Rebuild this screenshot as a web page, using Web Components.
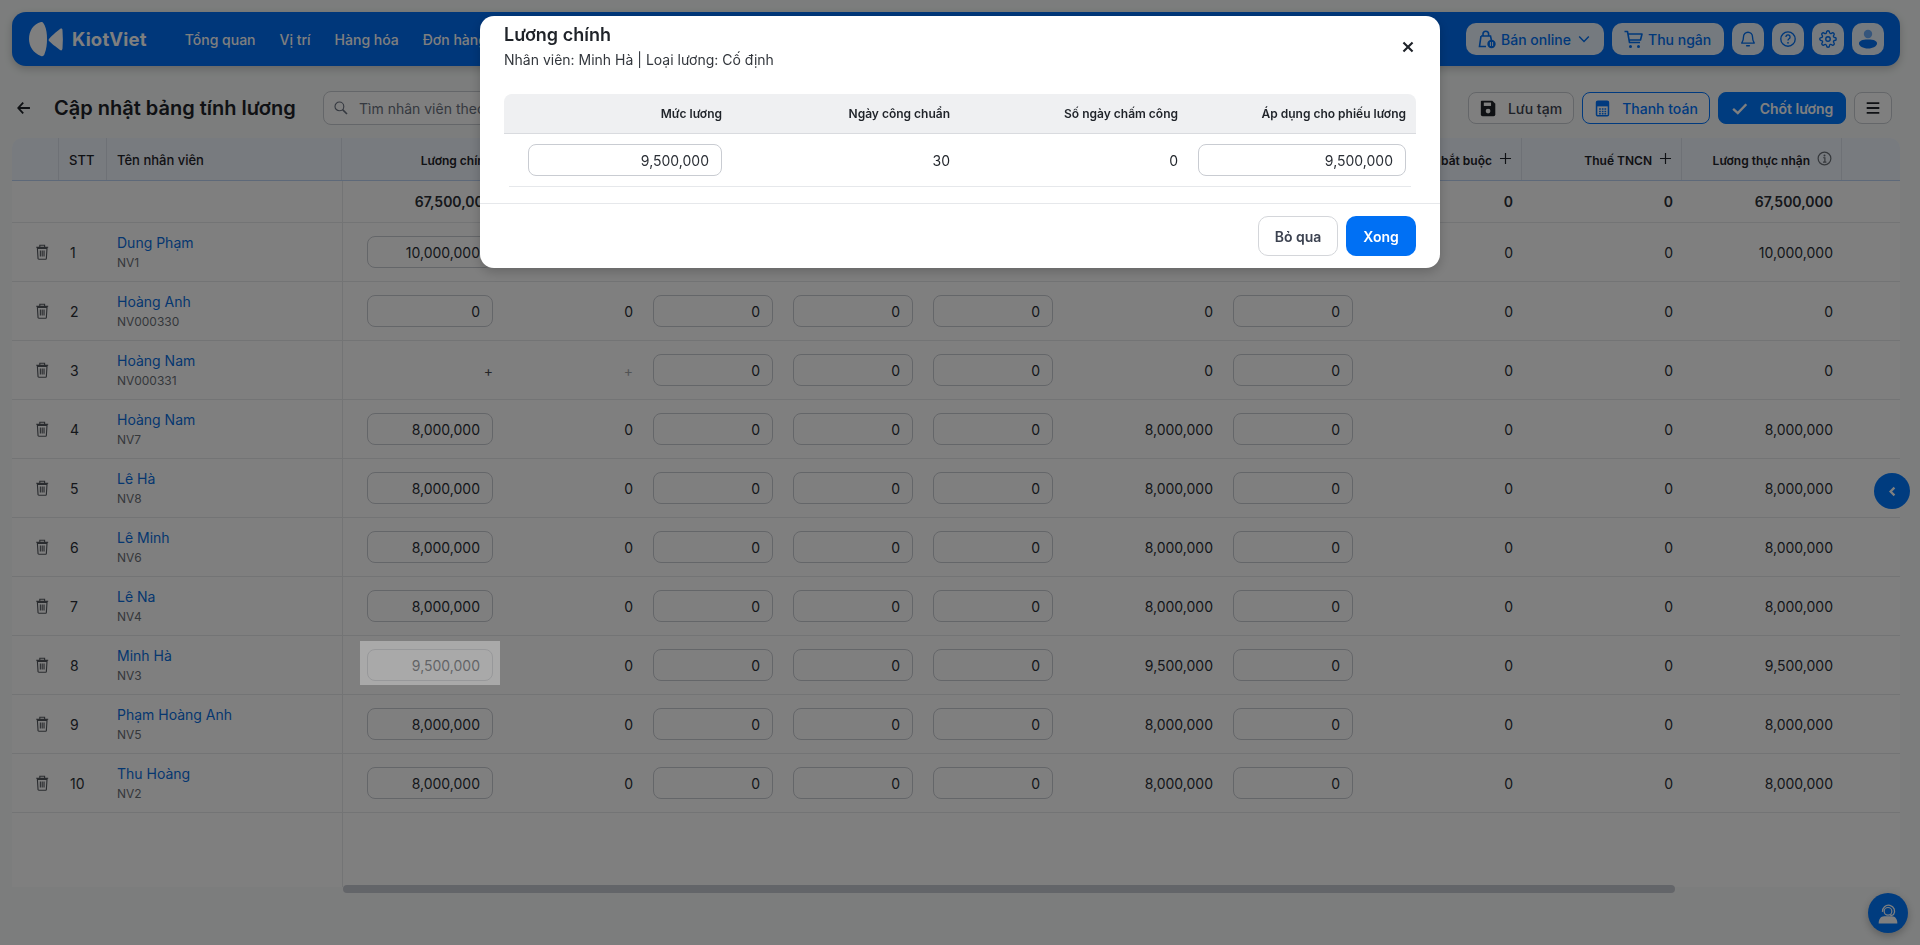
<!DOCTYPE html>
<html lang="vi">
<head>
<meta charset="utf-8">
<title>Cập nhật bảng tính lương</title>
<style>
    html, body { margin: 0; height: 100%; overflow: hidden; }
    body {
        background: #f8fbfa;
        font-family: Inter, "Noto Sans", sans-serif;
        color: #1f2329;
        padding: 12px 20px 0 12px;
        box-sizing: border-box;
    }
</style>
</head>
<body>
<kv-header></kv-header>
<kv-toolbar></kv-toolbar>
<kv-table></kv-table>
<kv-floats></kv-floats>
<kv-overlay>
    <kv-modal></kv-modal>
</kv-overlay>

<script>
const ICONS = {
    bag: '<path d="M4 7h9.500l1 4.500M4 7 2.500 17.500H9M6 7V5a2.800 2.800 0 0 1 5.600 0v2" fill="none" stroke="currentColor" stroke-width="1.600"/><circle cx="14.500" cy="15" r="4.200" fill="currentColor"/><path d="M13.400 13v4M15.600 13v4" stroke="#eaf4ff" stroke-width="1"/>',
    cart: '<path d="M1.500 2.500h3l2 11h10.500M5 5h14l-1.500 6H6" fill="none" stroke="currentColor" stroke-width="1.600" stroke-linejoin="round"/><circle cx="7.500" cy="17.500" r="1.500" fill="currentColor"/><circle cx="15.500" cy="17.500" r="1.500" fill="currentColor"/>',
    bell: '<path d="M10 2.500a5 5 0 0 0-5 5c0 4.500-1.500 6-2 7h14c-.5-1-2-2.500-2-7a5 5 0 0 0-5-5z" fill="none" stroke="currentColor" stroke-width="1.500" stroke-linejoin="round"/><path d="M8.500 17.500h3" stroke="currentColor" stroke-width="1.600" stroke-linecap="round"/>',
    help: '<circle cx="10" cy="10" r="8" fill="none" stroke="currentColor" stroke-width="1.500"/><path d="M7.700 7.700a2.300 2.300 0 1 1 3.500 2c-.8.5-1.200 1-1.200 2" fill="none" stroke="currentColor" stroke-width="1.500"/><circle cx="10" cy="14.200" r="1" fill="currentColor"/>',
    gear: '<g transform="scale(.833)" fill="none" stroke="currentColor" stroke-width="1.800"><circle cx="12" cy="12" r="3"/><path d="M19.4 15a1.65 1.65 0 0 0 .33 1.82l.06.06a2 2 0 0 1 0 2.83 2 2 0 0 1-2.83 0l-.06-.06a1.65 1.65 0 0 0-1.82-.33 1.65 1.65 0 0 0-1 1.51V21a2 2 0 0 1-2 2 2 2 0 0 1-2-2v-.09A1.65 1.65 0 0 0 9 19.4a1.65 1.65 0 0 0-1.82.33l-.06.06a2 2 0 0 1-2.83 0 2 2 0 0 1 0-2.83l.06-.06a1.65 1.65 0 0 0 .33-1.82 1.65 1.65 0 0 0-1.51-1H3a2 2 0 0 1-2-2 2 2 0 0 1 2-2h.09A1.65 1.65 0 0 0 4.6 9a1.65 1.65 0 0 0-.33-1.82l-.06-.06a2 2 0 0 1 0-2.83 2 2 0 0 1 2.83 0l.06.06a1.65 1.65 0 0 0 1.82.33H9a1.65 1.65 0 0 0 1-1.51V3a2 2 0 0 1 2-2 2 2 0 0 1 2 2v.09a1.65 1.65 0 0 0 1 1.51 1.65 1.65 0 0 0 1.82-.33l.06-.06a2 2 0 0 1 2.83 0 2 2 0 0 1 0 2.83l-.06.06a1.65 1.65 0 0 0-.33 1.82V9a1.65 1.65 0 0 0 1.51 1H21a2 2 0 0 1 2 2 2 2 0 0 1-2 2h-.09a1.65 1.65 0 0 0-1.51 1z"/></g>',
    user: '<circle cx="10" cy="5" r="4.200" fill="currentColor" opacity=".55"/><path d="M1 14.500C1 12 4 10.500 10 10.500s9 1.500 9 4-4 5-9 5-9-2.500-9-5z" fill="currentColor"/>',
    save: '<path d="M2 1h12.500L18 4.500V17a2 2 0 0 1-2 2H3a2 2 0 0 1-2-2V2a1 1 0 0 1 1-1z" fill="currentColor"/><rect x="4.500" y="3" width="8.500" height="4" fill="#fff"/><circle cx="9.500" cy="13" r="2.800" fill="#fff"/>',
    calc: '<rect x="3" y="1.500" width="14" height="17" rx="1.500" fill="none" stroke="currentColor" stroke-width="1.800"/><rect x="3" y="1.500" width="14" height="6" fill="currentColor"/><path d="M6 10.500h2M9.200 10.500h2M12.300 10.500h2M6 13.500h2M9.200 13.500h2M12.300 13.500h2M6 16.200h2M9.200 16.200h2M12.300 16.200h2" stroke="currentColor" stroke-width="1.800"/>',
    check: '<path d="M2.500 10.500 8 15.500 18 5" fill="none" stroke="currentColor" stroke-width="2.800"/>',
    menu: '<path d="M3 4.500h14M3 10h14M3 15.500h14" fill="none" stroke="currentColor" stroke-width="2"/>',
    chevron: '<path d="M4 7l6 6 6-6" fill="none" stroke="currentColor" stroke-width="1.800"/>',
    back: '<path d="M15.500 10H2.500M8 4 2.500 10 8 16" fill="none" stroke="currentColor" stroke-width="2"/>',
    search: '<circle cx="8" cy="8" r="5.500" fill="none" stroke="currentColor" stroke-width="1.400"/><path d="M12 12l5.500 5.500" stroke="currentColor" stroke-width="2"/>',
    trash: '<path d="M3 5.500h12l-.8 12.500a1 1 0 0 1-1 1H4.800a1 1 0 0 1-1-1zM1.500 4h15M6 4V1.500h6V4M6.700 8v7.500M9 8v7.500M11.300 8v7.500" fill="none" stroke="currentColor" stroke-width="1.400"/>',
    plus: '<path d="M10 1.500v17M1.500 10h17" stroke="currentColor" stroke-width="1.800"/>',
    info: '<circle cx="10" cy="10" r="8.500" fill="none" stroke="currentColor" stroke-width="1.600"/><circle cx="10" cy="6" r="1.300" fill="currentColor"/><path d="M8.200 9h2.300v5.500M8 14.800h4.500" fill="none" stroke="currentColor" stroke-width="1.600"/>',
    close: '<path d="M3.500 3.500l13 13M16.500 3.500l-13 13" stroke="currentColor" stroke-width="3"/>',
    left: '<path d="M13 4l-6 6 6 6" fill="none" stroke="currentColor" stroke-width="3.400"/>',
    agent: '<path d="M5 9a5.500 5.500 0 1 1 10 2.500M12 12.200c1.500 0 3-.4 3-1" fill="none" stroke="currentColor" stroke-width="1.200"/><circle cx="10" cy="8.500" r="3.500" fill="none" stroke="currentColor" stroke-width="1.100"/><path d="M1.500 19.500c0-4 2-6.500 5-6.500h7c3 0 5 2.500 5 6.500z" fill="currentColor"/>'
};

function icon(name, size) {
    return `<svg width="${size}" height="${size}" viewBox="0 0 20 20" aria-hidden="true">${ICONS[name]}</svg>`;
}

class KvHeader extends HTMLElement {
    constructor() {
        super();
        this.attachShadow({ mode: 'open' });
        this.shadowRoot.innerHTML = `
            <style>
                :host {
                    display: flex;
                    align-items: center;
                    height: 54px;
                    padding: 0 16px;
                    box-sizing: border-box;
                    background: #006ef4;
                    border-radius: 14px;
                    box-shadow: 0 3px 8px rgba(0, 0, 0, .2);
                    color: #fff;
                }
                .logo { display: flex; align-items: center; gap: 9px; }
                .logo b { font-size: 18.500px; font-weight: 700; letter-spacing: .2px; }
                nav { display: flex; gap: 24px; margin-left: 38px; font-size: 14px; font-weight: 500; white-space: nowrap; }
                .right { margin-left: auto; display: flex; gap: 8px; }
                .btn {
                    height: 32px;
                    min-width: 32px;
                    display: flex;
                    align-items: center;
                    justify-content: center;
                    box-sizing: border-box;
                    background: #eaf4ff;
                    color: #0070f4;
                    border-radius: 10px;
                    font-size: 14px;
                    font-weight: 500;
                    white-space: nowrap;
                }
                .btn.wide { justify-content: flex-start; padding-left: 11px; gap: 4px; }
                .btn.sq { width: 32px; }
            </style>
            <div class="logo">
                <svg width="35" height="36" viewBox="0 0 35 36">
                    <path d="M13 1C5 3 1 10 1 18c0 7 4 14 12 17 2 .6 3-.4 3.500-2 2-5 2.500-10 2.500-15 0-5-.5-10-2.500-14C15.500 2 15 .5 13 1z" fill="#fff"/>
                    <path d="M21 18c2-2.500 7-7 11-10 1.500-1 2.500-.5 2.500 1.500.5 6 .5 12 0 18-.3 2-1.300 2.500-2.500 1.500-4-3-9-7-11-9-.5-.6-.5-1.400 0-2z" fill="#fff"/>
                </svg>
                <b>KiotViet</b>
            </div>
            <nav><span>Tổng quan</span><span>Vị trí</span><span>Hàng hóa</span><span>Đơn hàng</span></nav>
            <div class="right">
                <div class="btn wide" style="width:138px">${icon('bag', 20)}<span>Bán online</span><span style="display:flex;margin-left:1px">${icon('chevron', 16)}</span></div>
                <div class="btn wide" style="width:112px;gap:5px">${icon('cart', 20)}<span>Thu ngân</span></div>
                <div class="btn sq">${icon('bell', 18)}</div>
                <div class="btn sq">${icon('help', 18)}</div>
                <div class="btn sq">${icon('gear', 18)}</div>
                <div class="btn sq">${icon('user', 20)}</div>
            </div>
        `;
    }
}

class KvToolbar extends HTMLElement {
    constructor() {
        super();
        this.attachShadow({ mode: 'open' });
        this.shadowRoot.innerHTML = `
            <style>
                :host {
                    display: flex;
                    align-items: center;
                    height: 34px;
                    margin: 25px 8px 13px 4px;
                }
                .back { display: flex; color: #1f2329; }
                h1 { margin: 0 0 0 20px; font-size: 20px; font-weight: 600; white-space: nowrap; width: 269px; }
                .search {
                    width: 300px;
                    height: 34px;
                    box-sizing: border-box;
                    border: 1px solid #c9ccd2;
                    border-radius: 8px;
                    display: flex;
                    align-items: center;
                    gap: 10px;
                    padding-left: 9px;
                    font-size: 14px;
                    color: #6b7280;
                    background: #fff;
                    white-space: nowrap;
                    overflow: hidden;
                }
                .actions { margin-left: auto; display: flex; gap: 8px; }
                .btn {
                    height: 32px;
                    box-sizing: border-box;
                    display: flex;
                    align-items: center;
                    justify-content: center;
                    gap: 11px;
                    border: 1px solid #c9ccd2;
                    border-radius: 8px;
                    font-size: 14px;
                    font-weight: 500;
                    background: #fff;
                    color: #3c4250;
                    white-space: nowrap;
                }
                .outline { border-color: #0074ff; color: #0074ff; }
                .solid { background: #0078ff; border-color: #0078ff; color: #fff; font-weight: 600; }
            </style>
            <span class="back">${icon('back', 18)}</span>
            <h1>Cập nhật bảng tính lương</h1>
            <div class="search">${icon('search', 16)}<span>Tìm nhân viên theo mã, tên</span></div>
            <div class="actions">
                <div class="btn" style="width:106px"><span style="color:#1f2329;display:flex">${icon('save', 17)}</span><span>Lưu tạm</span></div>
                <div class="btn outline" style="width:128px">${icon('calc', 17)}<span>Thanh toán</span></div>
                <div class="btn solid" style="width:128px;gap:12px">${icon('check', 17)}<span>Chốt lương</span></div>
                <div class="btn" style="width:38px;color:#1f2329">${icon('menu', 18)}</div>
            </div>
        `;
    }
}

class KvMoney extends HTMLElement {
    constructor() {
        super();
        this.attachShadow({ mode: 'open' });
        this.shadowRoot.innerHTML = `
            <style>
                :host {
                    display: flex;
                    align-items: center;
                    justify-content: flex-end;
                    height: 32px;
                    box-sizing: border-box;
                    padding-right: 12px;
                    border: 1px solid #c9ccd2;
                    border-radius: 8px;
                    background: #fff;
                    font-size: 14px;
                    color: #2b2f36;
                    flex: none;
                }
            </style>
            <slot></slot>
        `;
    }
}

const EMPLOYEES = [
    ['Dung Phạm', 'NV1', '10,000,000'],
    ['Hoàng Anh', 'NV000330', '0'],
    ['Hoàng Nam', 'NV000331', null],
    ['Hoàng Nam', 'NV7', '8,000,000'],
    ['Lê Hà', 'NV8', '8,000,000'],
    ['Lê Minh', 'NV6', '8,000,000'],
    ['Lê Na', 'NV4', '8,000,000'],
    ['Minh Hà', 'NV3', '9,500,000'],
    ['Phạm Hoàng Anh', 'NV5', '8,000,000'],
    ['Thu Hoàng', 'NV2', '8,000,000']
];

class KvTable extends HTMLElement {
    constructor() {
        super();
        this.attachShadow({ mode: 'open' });

        const rows = EMPLOYEES.map((e, i) => {
            const pay = e[2];
            const total = pay || '0';
            const first = pay
                ? `<kv-money style="width:126px">${pay}</kv-money>`
                : `<span class="plus-a">+</span>`;
            const second = pay ? '0' : `<span class="plus-b">+</span>`;
            return `
                <div class="row">
                    <div class="c trash">${icon('trash', 16)}</div>
                    <div class="c stt">${i + 1}</div>
                    <div class="c name"><a>${e[0]}</a><small>${e[1]}</small></div>
                    <div class="c r first">${first}</div>
                    <div class="c r">${second}</div>
                    <div class="c r"><kv-money style="width:120px">0</kv-money></div>
                    <div class="c r"><kv-money style="width:120px">0</kv-money></div>
                    <div class="c r"><kv-money style="width:120px">0</kv-money></div>
                    <div class="c r">${total}</div>
                    <div class="c r"><kv-money style="width:120px">0</kv-money></div>
                    <div class="c r n">0</div>
                    <div class="c r n">0</div>
                    <div class="c r n">${total}</div>
                    <div class="c"></div>
                </div>`;
        }).join('');

        this.shadowRoot.innerHTML = `
            <style>
                :host {
                    display: block;
                    position: relative;
                    height: 749px;
                    background: #fff;
                    border-radius: 10px 10px 0 0;
                    --cols: 47px 48px 235px 160px 141px 140px 140px 140px 160px 140px 159px 160px 160px 58px;
                    font-size: 14px;
                    color: #2b2f36;
                }
                .head, .total, .row { display: grid; grid-template-columns: var(--cols); }
                .head {
                    height: 43px;
                    box-sizing: border-box;
                    background: #f0f6ff;
                    border-bottom: 1px solid #bcd2f2;
                    border-radius: 10px 10px 0 0;
                    font-size: 12px;
                    font-weight: 600;
                    color: #1f2329;
                }
                .head .h {
                    display: flex;
                    align-items: center;
                    justify-content: flex-end;
                    gap: 7px;
                    padding: 2px 9px 0 10px;
                    box-sizing: border-box;
                    border-right: 1px solid #dde3ec;
                    white-space: nowrap;
                }
                .head .h.l { justify-content: flex-start; font-size: 13px; font-weight: 500; }
                .head svg { margin-top: -4px; }
                .total { height: 41px; border-bottom: 1px solid #e6e8eb; font-weight: 600; }
                .row { height: 59px; box-sizing: border-box; border-bottom: 1px solid #e6e8eb; }
                .c { display: flex; align-items: center; padding: 0 10px; box-sizing: border-box; min-width: 0; }
                .r { justify-content: flex-end; }
                .first { padding-right: 9px; }
                .n { padding-right: 9px; }
                .trash { padding: 0 0 0 23px; color: #55595f; }
                .stt { padding-left: 11px; }
                .name { flex-direction: column; align-items: flex-start; justify-content: center; gap: 3px; }
                .name a { color: #0a6ee0; line-height: 18px; }
                .name small { font-size: 12px; color: #6b7077; line-height: 15px; }
                .plus-a { color: #4a4d52; }
                .plus-b { color: #a5a8ad; }
                .divider { position: absolute; left: 330px; top: 43px; bottom: 0; width: 1px; background: #e6e8eb; }
                .scroll {
                    position: absolute;
                    left: 331px;
                    width: 1332px;
                    bottom: -6px;
                    height: 8px;
                    border-radius: 4px;
                    background: #c7cad2;
                }
            </style>
            <div class="head">
                <div class="h"></div>
                <div class="h l">STT</div>
                <div class="h l">Tên nhân viên</div>
                <div class="h">Lương chính</div>
                <div class="h"></div><div class="h"></div><div class="h"></div><div class="h"></div><div class="h"></div><div class="h"></div>
                <div class="h">Bảo hiểm bắt buộc${icon('plus', 13)}</div>
                <div class="h">Thuế TNCN${icon('plus', 13)}</div>
                <div class="h">Lương thực nhận<span style="display:flex;color:#6b7077">${icon('info', 15)}</span></div>
                <div class="h" style="border:0"></div>
            </div>
            <div class="total">
                <div class="c"></div><div class="c"></div><div class="c"></div>
                <div class="c r first">67,500,000</div>
                <div class="c"></div><div class="c"></div><div class="c"></div><div class="c"></div><div class="c"></div><div class="c"></div>
                <div class="c r n">0</div>
                <div class="c r n">0</div>
                <div class="c r n">67,500,000</div>
                <div class="c"></div>
            </div>
            ${rows}
            <div class="divider"></div>
            <div class="scroll"></div>
        `;
    }
}

class KvFloats extends HTMLElement {
    constructor() {
        super();
        this.attachShadow({ mode: 'open' });
        this.shadowRoot.innerHTML = `
            <style>
                .f {
                    position: fixed;
                    border-radius: 50%;
                    display: flex;
                    align-items: center;
                    justify-content: center;
                    background: #0078ff;
                    color: #fff;
                }
                .side { left: 1874px; top: 473px; width: 36px; height: 36px; }
                .help { left: 1868px; top: 893px; width: 40px; height: 40px; box-shadow: 0 3px 8px rgba(0, 0, 0, .25); }
            </style>
            <div class="f side">${icon('left', 13)}</div>
            <div class="f help">${icon('agent', 22)}</div>
        `;
    }
}

class KvOverlay extends HTMLElement {
    constructor() {
        super();
        this.attachShadow({ mode: 'open' });
        this.shadowRoot.innerHTML = `
            <style>
                :host {
                    position: fixed;
                    inset: 0;
                    display: flex;
                    justify-content: center;
                    align-items: flex-start;
                    background: rgba(0, 0, 0, .5);
                    padding-top: 16px;
                    box-sizing: border-box;
                }
                .spot {
                    position: absolute;
                    left: 360px;
                    top: 641px;
                    width: 140px;
                    height: 44px;
                    background: rgba(255, 255, 255, .33);
                }
            </style>
            <div class="spot"></div>
            <slot></slot>
        `;
    }
}

class KvModal extends HTMLElement {
    constructor() {
        super();
        this.attachShadow({ mode: 'open' });
        this.shadowRoot.innerHTML = `
            <style>
                :host {
                    display: block;
                    width: 960px;
                    height: 252px;
                    position: relative;
                    background: #fff;
                    border-radius: 14px;
                    box-shadow: 0 4px 12px rgba(0, 0, 0, .2);
                    color: #1f2329;
                }
                .top { padding: 8px 24px 0; }
                h2 { margin: 0; font-size: 18px; line-height: 22px; font-weight: 600; }
                p { margin: 4px 0 0; font-size: 14px; line-height: 20px; color: #33373d; }
                .x { position: absolute; right: 25px; top: 24px; display: flex; color: #1f2329; }
                .tbl { margin: 24px 24px 0; }
                .tr { display: grid; grid-template-columns: repeat(4, 228px); }
                .th {
                    height: 40px;
                    background: #eff0f2;
                    border-bottom: 1px solid #d9dbdf;
                    box-sizing: border-box;
                    border-radius: 8px 8px 0 0;
                    font-size: 12px;
                    font-weight: 600;
                }
                .th div { display: flex; align-items: center; justify-content: flex-end; padding-right: 10px; }
                .td { height: 53px; padding-bottom: 1px; box-sizing: border-box; font-size: 14px; position: relative; }
                .td::after {
                    content: "";
                    position: absolute;
                    left: 5px;
                    right: 5px;
                    bottom: 0;
                    height: 1px;
                    background: #e6e8eb;
                }
                .td div { display: flex; align-items: center; justify-content: flex-end; padding: 0 10px; }
                .foot {
                    margin-top: 16px;
                    border-top: 1px solid #e6e8eb;
                    padding: 12px 24px;
                    display: flex;
                    justify-content: flex-end;
                    gap: 8px;
                }
                .b {
                    height: 40px;
                    box-sizing: border-box;
                    border-radius: 10px;
                    display: flex;
                    align-items: center;
                    justify-content: center;
                    font-size: 14px;
                    font-weight: 600;
                }
                .skip { width: 80px; border: 1px solid #d4d6da; color: #3c4250; }
                .ok { width: 70px; background: #0070f4; color: #fff; }
            </style>
            <div class="top">
                <h2>Lương chính</h2>
                <p>Nhân viên: Minh Hà | Loại lương: Cố định</p>
            </div>
            <span class="x">${icon('close', 14)}</span>
            <div class="tbl">
                <div class="tr th"><div>Mức lương</div><div>Ngày công chuẩn</div><div>Số ngày chấm công</div><div>Áp dụng cho phiếu lương</div></div>
                <div class="tr td">
                    <div><kv-money style="width:194px">9,500,000</kv-money></div>
                    <div>30</div>
                    <div>0</div>
                    <div><kv-money style="width:208px">9,500,000</kv-money></div>
                </div>
            </div>
            <div class="foot"><div class="b skip">Bỏ qua</div><div class="b ok">Xong</div></div>
        `;
    }
}

customElements.define('kv-header', KvHeader);
customElements.define('kv-toolbar', KvToolbar);
customElements.define('kv-money', KvMoney);
customElements.define('kv-table', KvTable);
customElements.define('kv-floats', KvFloats);
customElements.define('kv-overlay', KvOverlay);
customElements.define('kv-modal', KvModal);
</script>
</body>
</html>
